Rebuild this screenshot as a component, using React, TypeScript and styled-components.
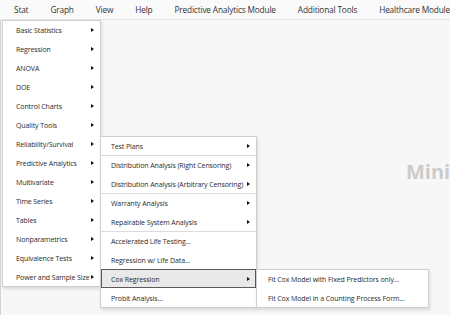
import React from 'react';
import styled, { createGlobalStyle } from 'styled-components';

const GlobalStyle = createGlobalStyle`
    html, body {
        margin: 0;
        padding: 0;
        width: 450px;
        height: 315px;
        overflow: hidden;
        background: #f7f7f7;
        font-family: "Open Sans", "Noto Sans", sans-serif;
        color: #222;
    }
    #root {
        height: 100%;
    }
`;

const Window = styled.div`
    position: relative;
    width: 450px;
    height: 315px;
    display: flex;
    flex-direction: column;
    overflow: hidden;
`;

const MenuBar = styled.nav`
    height: 19px;
    display: flex;
    align-items: center;
    padding-left: 3px;
    background: #fafafa;
    border-bottom: 1px solid #e6e6e6;
    white-space: nowrap;
`;

const MenuBarItem = styled.span`
    padding: 0 11px;
    font-size: 8.3px;
    letter-spacing: -0.17px;
    color: #333;
    line-height: 17px;
`;

const Workspace = styled.main`
    flex: 1;
    display: flex;
`;

const SidePanel = styled.div`
    width: 8px;
    border-right: 1px solid #d4d4d4;
`;

const Watermark = styled.div`
    margin: 138px 0 0 405px;
    font-size: 20px;
    font-weight: 700;
    color: #cbcbcb;
    letter-spacing: 0;
    white-space: nowrap;
`;

const Dropdown = styled.ul<{ $left: number; $top: number; $width: number }>`
    position: absolute;
    left: ${p => p.$left}px;
    top: ${p => p.$top}px;
    width: ${p => p.$width}px;
    margin: 0;
    padding: 0;
    list-style: none;
    background: #fff;
    border: 1px solid #cfcfcf;
    box-shadow: 1px 2px 3px rgba(0, 0, 0, 0.12);
    box-sizing: border-box;
    z-index: 2;
`;

const Item = styled.li<{ $sep?: boolean; $active?: boolean; $indent: number }>`
    height: 19px;
    display: flex;
    align-items: center;
    justify-content: space-between;
    padding: 0 6px 0 ${p => p.$indent}px;
    font-size: 7px;
    letter-spacing: -0.1px;
    color: #2a2a2a;
    white-space: nowrap;
    box-sizing: border-box;
    border-top: 1px solid ${p => (p.$sep ? '#dcdcdc' : 'transparent')};
    ${p => p.$active && `
        background: #e9e9e9;
        outline: 1px solid #5a5a5a;
        outline-offset: -1px;
    `}
    &:first-child {
        border-top: none;
        height: 18px;
    }
`;

const Arrow = styled.span`
    width: 0;
    height: 0;
    border-top: 2.5px solid transparent;
    border-bottom: 2.5px solid transparent;
    border-left: 3px solid #111;
`;

type Entry = { label: string; sub?: boolean; sep?: boolean; active?: boolean };

const statItems: Entry[] = [
    { label: 'Basic Statistics', sub: true },
    { label: 'Regression', sub: true },
    { label: 'ANOVA', sub: true },
    { label: 'DOE', sub: true },
    { label: 'Control Charts', sub: true },
    { label: 'Quality Tools', sub: true },
    { label: 'Reliability/Survival', sub: true },
    { label: 'Predictive Analytics', sub: true },
    { label: 'Multivariate', sub: true },
    { label: 'Time Series', sub: true },
    { label: 'Tables', sub: true },
    { label: 'Nonparametrics', sub: true },
    { label: 'Equivalence Tests', sub: true },
    { label: 'Power and Sample Size', sub: true },
];

const reliabilityItems: Entry[] = [
    { label: 'Test Plans', sub: true },
    { label: 'Distribution Analysis (Right Censoring)', sub: true, sep: true },
    { label: 'Distribution Analysis (Arbitrary Censoring)', sub: true },
    { label: 'Warranty Analysis', sub: true, sep: true },
    { label: 'Repairable System Analysis', sub: true },
    { label: 'Accelerated Life Testing...', sep: true },
    { label: 'Regression w/ Life Data...' },
    { label: 'Cox Regression', sub: true, active: true },
    { label: 'Probit Analysis...' },
];

const coxItems: Entry[] = [
    { label: 'Fit Cox Model with Fixed Predictors only...' },
    { label: 'Fit Cox Model in a Counting Process Form...' },
];

const MenuList: React.FC<{ items: Entry[]; left: number; top: number; width: number; indent: number }> = ({ items, left, top, width, indent }) => (
    <Dropdown $left={left} $top={top} $width={width}>
        {items.map(it => (
            <Item key={it.label} $sep={it.sep} $active={it.active} $indent={indent}>
                <span>{it.label}</span>
                {it.sub && <Arrow />}
            </Item>
        ))}
    </Dropdown>
);

export default function App() {
    return <>
        <GlobalStyle />
        <Window>
            <MenuBar>
                {['Stat', 'Graph', 'View', 'Help', 'Predictive Analytics Module', 'Additional Tools', 'Healthcare Module'].map(m => (
                    <MenuBarItem key={m}>{m}</MenuBarItem>
                ))}
            </MenuBar>
            <Workspace>
                <SidePanel />
                <Watermark>Minitab</Watermark>
            </Workspace>
            <MenuList items={statItems} left={2} top={20} width={99} indent={13} />
            <MenuList items={reliabilityItems} left={100} top={136} width={157} indent={10} />
            <MenuList items={coxItems} left={256} top={269} width={173} indent={11} />
        </Window>
    </>;
}
